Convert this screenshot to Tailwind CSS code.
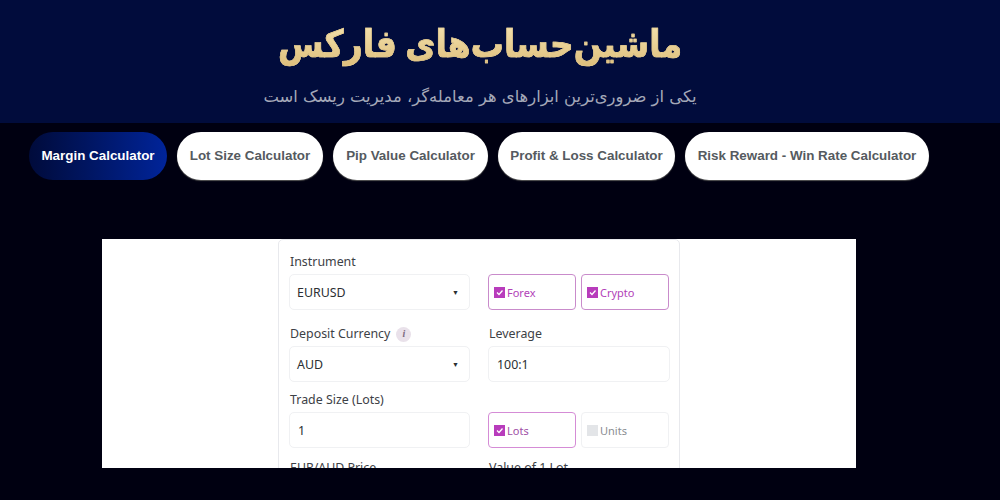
<!DOCTYPE html>
<html lang="fa">
<head>
  <meta charset="UTF-8">
  <title>ماشین حساب‌های فارکس</title>
  <script src="https://cdn.jsdelivr.net/npm/@tailwindcss/browser@4"></script>
</head>
<body class="h-[500px] overflow-hidden bg-[#000011] font-['Liberation_Sans',sans-serif]">
  <header dir="rtl" class="h-[123px] bg-[#010c3c] flex flex-col items-center pr-[40px] font-['DejaVu_Sans',sans-serif]">
    <h1 class="mt-[16px] h-[56px] leading-[56px] text-[33px] font-bold scale-y-[1.15] [word-spacing:-3px] [-webkit-text-stroke:0.6px_#e6cc8f] bg-gradient-to-b from-[#f9ebbd] to-[#d9b76f] bg-clip-text text-transparent">ماشین‌حساب‌های فارکس</h1>
    <p class="mt-[13px] text-[16.400px] leading-[24px] text-[#a4a8b8]">یکی از ضروری‌ترین ابزارهای هر معامله‌گر، مدیریت ریسک است</p>
  </header>

  <nav class="flex gap-[10px] pl-[29px] pt-[9px] text-[13.400px] font-bold">
    <a class="h-[48px] w-[138px] flex items-center justify-center rounded-full bg-gradient-to-r from-[#000b3b] to-[#00249a] text-white">Margin Calculator</a>
    <a class="h-[48px] w-[146px] flex items-center justify-center rounded-full bg-white text-[#555a60] shadow-[0_1px_1px_#555]">Lot Size Calculator</a>
    <a class="h-[48px] w-[155px] flex items-center justify-center rounded-full bg-white text-[#555a60] shadow-[0_1px_1px_#555]">Pip Value Calculator</a>
    <a class="h-[48px] w-[177px] flex items-center justify-center rounded-full bg-white text-[#555a60] shadow-[0_1px_1px_#555]">Profit &amp; Loss Calculator</a>
    <a class="h-[48px] w-[244px] flex items-center justify-center rounded-full bg-white text-[#555a60] shadow-[0_1px_1px_#555]">Risk Reward - Win Rate Calculator</a>
  </nav>

  <main class="mt-[59px] ml-[102px] w-[754px] h-[229px] overflow-hidden bg-white font-['Noto_Sans',sans-serif]">
    <div class="ml-[176px] w-[402px] h-[300px] border border-[#e8e9ed] rounded-[5px] pt-[12px] px-[10px]">
      <div class="grid grid-cols-[181px_182px] gap-x-[18px] text-[12.400px] text-[#3d4146]">
        <div>
          <label class="block h-[22px] leading-[20px] pl-px">Instrument</label>
          <div class="h-[36px] border border-[#f0f1f3] rounded-[5px] flex items-center justify-between pl-[7px] pr-[10px] pt-[2px] text-[#2b2f33]">EURUSD<span class="text-[7px]">▼</span></div>
        </div>
        <div class="pt-[22px] flex gap-[5px]">
          <div class="w-[88px] h-[36px] border-[1.500px] border-[#c98bcb] rounded-[4px] flex items-center gap-[2px] pl-[5px] text-[11px] text-[#b23fb8]">
            <svg class="w-[11px] h-[11px]" viewBox="0 0 11 11"><rect width="11" height="11" fill="#b83cbc"/><path d="M3 5.5l2 2 3.500-4" fill="none" stroke="#fff" stroke-width="1.300"/></svg><span class="pt-[2px]">Forex</span></div>
          <div class="w-[88px] h-[36px] border-[1.500px] border-[#c98bcb] rounded-[4px] flex items-center gap-[2px] pl-[5px] text-[11px] text-[#b23fb8]">
            <svg class="w-[11px] h-[11px]" viewBox="0 0 11 11"><rect width="11" height="11" fill="#b83cbc"/><path d="M3 5.5l2 2 3.500-4" fill="none" stroke="#fff" stroke-width="1.300"/></svg><span class="pt-[2px]">Crypto</span></div>
        </div>

        <div class="mt-[14px]">
          <label class="flex items-center gap-[6px] h-[20px] mb-[2px] leading-[20px] pl-px">Deposit Currency
            <span class="w-[15px] h-[15px] rounded-full bg-[#e9e1ea] flex items-center justify-center text-[10px] italic font-bold font-['Liberation_Serif',serif] text-[#7b6a80]">i</span></label>
          <div class="h-[36px] border border-[#f0f1f3] rounded-[5px] flex items-center justify-between pl-[7px] pr-[10px] pt-[2px] text-[#2b2f33]">AUD<span class="text-[7px]">▼</span></div>
        </div>
        <div class="mt-[14px]">
          <label class="block h-[22px] leading-[20px] pl-px">Leverage</label>
          <div class="h-[36px] border border-[#f0f1f3] rounded-[5px] flex items-center pl-[8px] pt-[2px] text-[#2b2f33]">100:1</div>
        </div>

        <div class="mt-[8px]">
          <label class="block h-[22px] leading-[20px] pl-px">Trade Size (Lots)</label>
          <div class="h-[36px] border border-[#f0f1f3] rounded-[5px] flex items-center pl-[8px] pt-[2px] text-[#2b2f33]">1</div>
        </div>
        <div class="mt-[8px] pt-[22px] flex gap-[5px]">
          <div class="w-[88px] h-[36px] border-[1.500px] border-[#d58cd6] rounded-[4px] flex items-center gap-[2px] pl-[5px] text-[11px] text-[#a04fa6]">
            <svg class="w-[11px] h-[11px]" viewBox="0 0 11 11"><rect width="11" height="11" fill="#b83cbc"/><path d="M3 5.5l2 2 3.500-4" fill="none" stroke="#fff" stroke-width="1.300"/></svg><span class="pt-[2px]">Lots</span></div>
          <div class="w-[88px] h-[36px] border-[1.500px] border-[#f0f1f3] rounded-[4px] flex items-center gap-[2px] pl-[5px] text-[11px] text-[#8a8d92]">
            <span class="w-[11px] h-[11px] bg-[#e3e5e8]"></span><span class="pt-[2px]">Units</span></div>
        </div>

        <div class="mt-[10px]">
          <label class="block h-[22px] leading-[20px] pl-px">EUR/AUD Price</label>
        </div>
        <div class="mt-[10px]">
          <label class="block h-[22px] leading-[20px] pl-px">Value of 1 Lot</label>
        </div>
      </div>
    </div>
  </main>
</body>
</html>
